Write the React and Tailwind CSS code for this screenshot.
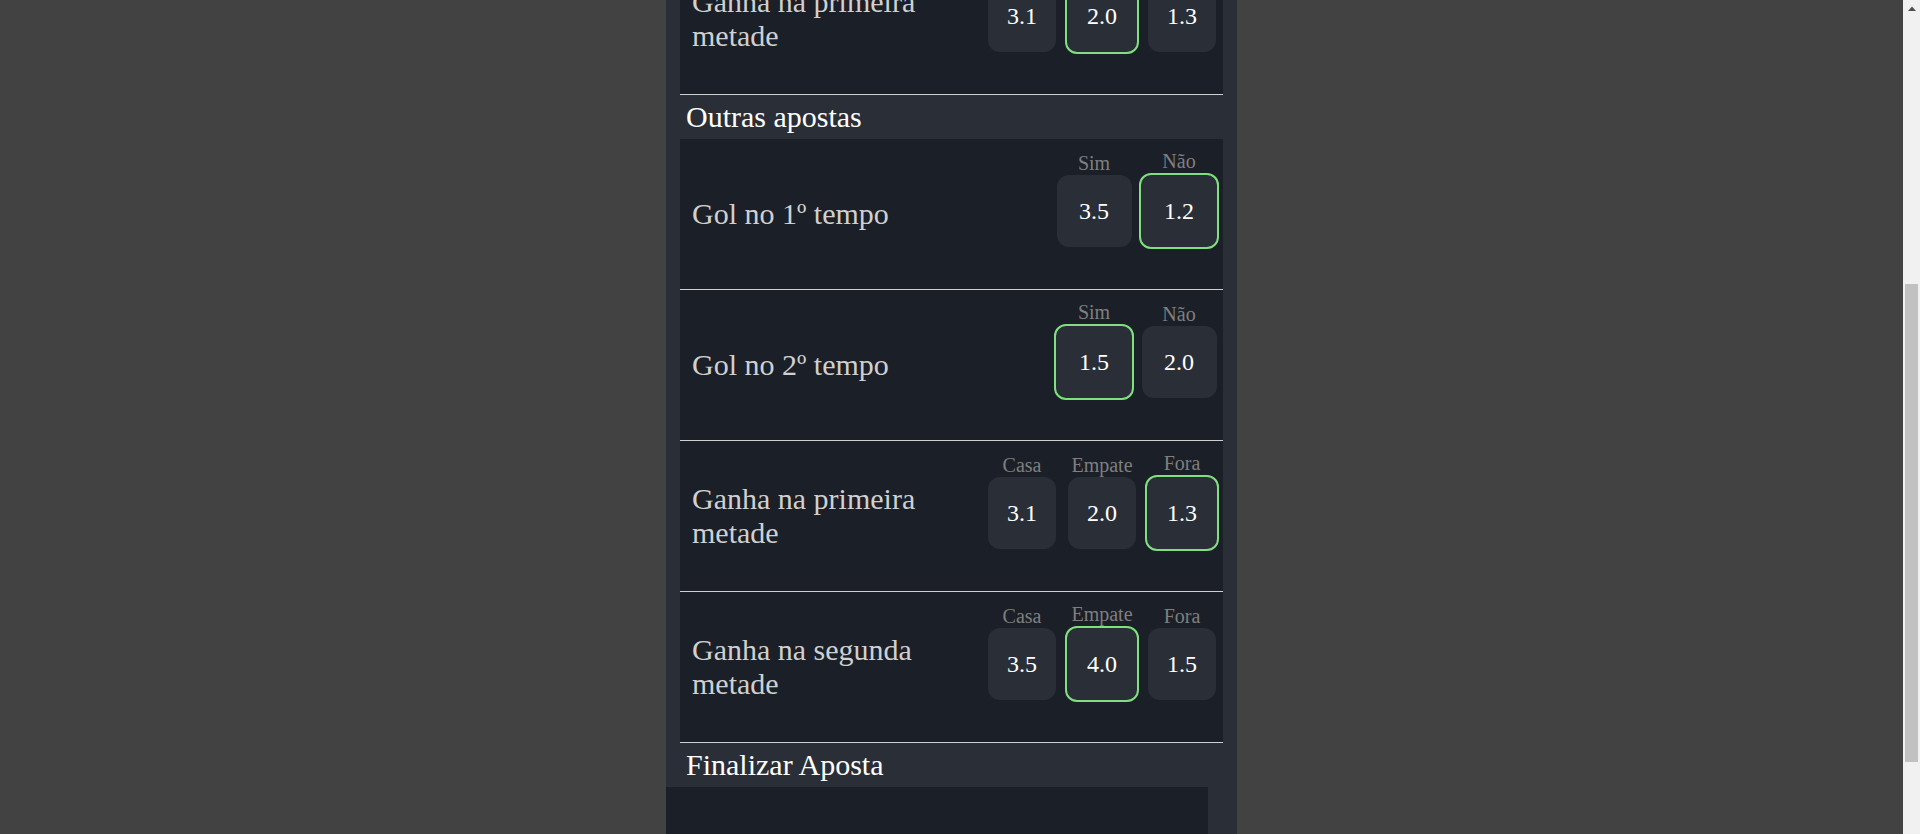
import React from "react";

const topRow = {
  label: "Ganha na primeira metade",
  odds: [
    { k: "Casa", v: "3.1" },
    { k: "Empate", v: "2.0", sel: true },
    { k: "Fora", v: "1.3" },
  ],
};

const rows = [
  {
    label: "Gol no 1º tempo",
    odds: [
      { k: "Sim", v: "3.5" },
      { k: "Não", v: "1.2", sel: true },
    ],
  },
  {
    label: "Gol no 2º tempo",
    odds: [
      { k: "Sim", v: "1.5", sel: true },
      { k: "Não", v: "2.0" },
    ],
  },
  {
    label: "Ganha na primeira metade",
    odds: [
      { k: "Casa", v: "3.1" },
      { k: "Empate", v: "2.0" },
      { k: "Fora", v: "1.3", sel: true },
    ],
  },
  {
    label: "Ganha na segunda metade",
    odds: [
      { k: "Casa", v: "3.5" },
      { k: "Empate", v: "4.0", sel: true },
      { k: "Fora", v: "1.5" },
    ],
  },
];

function OddCol({ o, three }) {
  const colW = three ? "w-[74px]" : "w-[80px]";
  let box;
  if (o.sel) {
    box = three
      ? "w-[74px] h-[76px] border-2 border-[#80e080]"
      : "w-[80px] h-[76px] border-2 border-[#80e080]";
  } else {
    box = three ? "w-[68px] h-[72px]" : "w-[75px] h-[72px]";
  }
  return (
    <div className={`flex flex-col items-center ${colW}`}>
      <span className="text-[20px] leading-[23px] text-[#7f7f7f]">{o.k}</span>
      <div
        className={`flex items-center justify-center rounded-xl bg-[#2a2f37] text-[24px] text-white ${box}`}
      >
        {o.v}
      </div>
    </div>
  );
}

function Row({ row, first }) {
  const three = row.odds.length === 3;
  return (
    <div
      className={`flex h-[151px] items-center border-b border-[#cfcfcf] bg-[#1b1f27] pl-3 ${
        first ? "-mt-[56px]" : ""
      }`}
    >
      <div className="min-w-0 flex-1 text-[30px] leading-[34.5px] text-[#d0d0d0]">
        {row.label}
      </div>
      <div
        className={`mb-[29px] flex items-center pr-1 ${three ? "gap-[6px]" : "gap-[5px]"}`}
      >
        {row.odds.map((o) => (
          <OddCol key={o.k} o={o} three={three} />
        ))}
      </div>
    </div>
  );
}

function Header({ children }) {
  return (
    <div className="h-[44px] pl-[6px] pt-[5px] text-[30px] leading-[34.5px] text-white">
      {children}
    </div>
  );
}

export default function App() {
  return (
    <div className="flex h-[834px] w-full overflow-hidden bg-[#424242] font-['Liberation_Serif','Times_New_Roman',serif]">
      <div className="flex flex-1 justify-center overflow-hidden">
        <div className="flex w-[571px] flex-col bg-[#2a2f37]">
          <div className="ml-[14px] w-[543px]">
            <Row row={topRow} first />
            <Header>Outras apostas</Header>
            {rows.map((r) => (
              <Row key={r.label} row={r} />
            ))}
          </div>
          <div className="ml-[14px] w-[543px]">
            <Header>Finalizar Aposta</Header>
          </div>
          <div className="h-[300px] w-[542px] shrink-0 bg-[#1b1f27]" />
        </div>
      </div>
      <div className="flex w-[17px] shrink-0 flex-col items-center bg-[#f1f1f1]">
        <div className="flex h-[17px] w-full items-center justify-center">
          <svg width="8" height="5" viewBox="0 0 8 5">
            <polygon points="0,5 4,0.5 8,5" fill="#505050" />
          </svg>
        </div>
        <div className="mt-[267px] h-[478px] w-[13px] bg-[#c1c1c1]" />
      </div>
    </div>
  );
}
